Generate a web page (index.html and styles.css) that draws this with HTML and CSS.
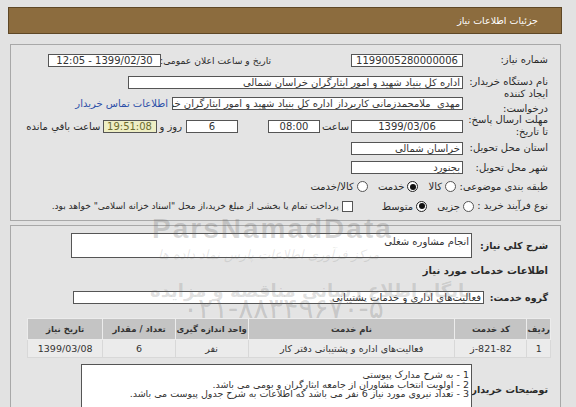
FILE: index.html
```html
<!DOCTYPE html>
<html lang="fa" dir="rtl">
<head>
<meta charset="utf-8">
<link rel="stylesheet" href="styles.css">
</head>
<body>
<div class="page">
  <div class="titlebar">جزئیات اطلاعات نیاز</div>

  <div class="box box1">
    <div class="row r1">
      <div class="lbl">شماره نیاز:</div>
      <div class="inp w-num center">1199005280000006</div>
      <div class="lbl-mid">تاریخ و ساعت اعلان عمومی:</div>
      <div class="inp w-date center">1399/02/30 - 12:05</div>
    </div>
    <div class="row r2">
      <div class="lbl">نام دستگاه خریدار:</div>
      <div class="inp w-org">اداره کل بنیاد شهید و امور ایثارگران خراسان شمالی</div>
    </div>
    <div class="row r3">
      <div class="lbl two3">ایجاد کننده<br>درخواست:</div>
      <div class="inp w-creator">مهدی&nbsp; ملامحمدزمانی کاربرداز اداره کل بنیاد شهید و امور ایثارگران خراسان شمالی</div>
      <a class="link" href="#">اطلاعات تماس خریدار</a>
    </div>
    <div class="row r4">
      <div class="lbl">مهلت ارسال پاسخ:<br>تا تاریخ:</div>
      <div class="inp w-num center">1399/03/06</div>
      <div class="txt t-saat">ساعت</div>
      <div class="inp w-small center">08:00</div>
      <div class="inp w-small center gap-day">6</div>
      <div class="txt t-rooz">روز و</div>
      <div class="inp w-time center remain">19:51:08</div>
      <div class="txt t-remain">ساعت باقي مانده</div>
    </div>
    <div class="row r5">
      <div class="lbl">استان محل تحویل:</div>
      <div class="inp w-num">خراسان شمالی</div>
    </div>
    <div class="row r6">
      <div class="lbl">شهر محل تحویل:</div>
      <div class="inp w-num">بجنورد</div>
    </div>
    <div class="row r7">
      <div class="lbl">طبقه بندی موضوعی:</div>
      <div class="opts opts7">
        <span class="radio"></span><span class="opt">کالا</span>
        <span class="radio on"></span><span class="opt">خدمت</span>
        <span class="radio"></span><span class="opt">کالا/خدمت</span>
      </div>
    </div>
    <div class="row r8">
      <div class="lbl lbl8">نوع فرآیند خرید :</div>
      <div class="opts opts8">
        <span class="radio"></span><span class="opt">جزیی</span>
        <span class="radio on"></span><span class="opt before-check">متوسط</span>
        <span class="check"></span><span class="opt long">پرداخت تمام یا بخشی از مبلغ خرید،از محل "اسناد خزانه اسلامی" خواهد بود.</span>
      </div>
    </div>
  </div>

  <div class="box box2">
    <div class="row b-desc">
      <div class="blbl w76">شرح کلي نياز:</div>
      <div class="inp area-desc">انجام مشاوره شغلی</div>
    </div>
    <div class="section">اطلاعات خدمات مورد نیاز</div>
    <div class="row b-group">
      <div class="blbl w64">گروه خدمت:</div>
      <div class="inp w-group">فعالیت‌های اداری و خدمات پشتیبانی</div>
    </div>
    <table class="grid">
      <thead>
        <tr>
          <th class="c1">ردیف</th>
          <th class="c2">کد خدمت</th>
          <th class="c3">نام خدمت</th>
          <th class="c4">واحد اندازه گیری</th>
          <th class="c5">تعداد / مقدار</th>
          <th class="c6">تاریخ نیاز</th>
        </tr>
      </thead>
      <tbody>
        <tr>
          <td>1</td>
          <td>821-82-ز</td>
          <td>فعالیت‌های اداره و پشتیبانی دفتر کار</td>
          <td>نفر</td>
          <td>6</td>
          <td>1399/03/08</td>
        </tr>
      </tbody>
    </table>
    <div class="row b-notes">
      <div class="blbl w76">توضیحات خریدار:</div>
      <div class="inp area-notes">1 - به شرح مدارک پیوستی<br>2 - اولویت انتخاب مشاوران از جامعه ایثارگران و بومی می باشد.<br>3 - تعداد نیروی مورد نیاز 6 نفر می باشد که اطلاعات به شرح جدول پیوست می باشد.</div>
    </div>
  </div>

  <div class="wm wm-latin">ParsNamadData</div>
  <div class="wm wm-fa1">مرکز فرآوری اطلاعات پارس نماد داده ها</div>
  <div class="wm wm-fa2">پایگاه اطلاع رسانی مناقصه و مزایده</div>
  <div class="wm wm-tel">۰۲۱-۸۸۳۴۹۶۷۰-۵</div>
</div>
</body>
</html>
```

FILE: styles.css
```css
html, body {
  margin: 0;
  padding: 0;
}
body {
  background: #e2e2e2;
  font-family: "DejaVu Sans", sans-serif;
  font-size: 10px;
  color: #2a2a2a;
  overflow: hidden;
}
.page {
  width: 576px;
  height: 407px;
  padding: 7px 14px 0 8px;
  box-sizing: border-box;
  position: relative;
  overflow: hidden;
}
.titlebar {
  height: 25px;
  background: #8c6c3e;
  border: 1px solid #5e4726;
  color: #fff;
  font-size: 9.5px;
  line-height: 25px;
  padding-right: 23px;
}
.box {
  border: 1px solid #a8a8a8;
  background: #e4e4e4;
  margin-left: 2px;
  margin-right: 1px;
  padding-right: 12px;
}
.box1 {
  margin-top: 10px;
  padding-top: 4px;
  height: 171px;
}
.box2 {
  margin-top: 4px;
  padding-top: 7px;
  height: 200px;
}
.row {
  display: flex;
  align-items: center;
  position: relative;
  z-index: 2;
  white-space: nowrap;
}
.lbl {
  width: 85px;
  flex: none;
  line-height: 12px;
}
.two3 {
  line-height: 15px;
  position: relative;
  top: -3px;
}
.inp {
  background: #fff;
  border: 1px solid #555;
  height: 11px;
  line-height: 11px;
  padding: 0 2px;
  white-space: nowrap;
  overflow: hidden;
  flex: none;
  color: #333;
}
.center { text-align: center; }
.w-num { width: 106px; }
.w-date { width: 107px; }
.w-org { width: 329px; }
.w-creator { width: 285px; }
.w-small { width: 46px; }
.w-time { width: 48px; }
.lbl-mid {
  width: 106px;
  font-size: 9.2px;
  margin-right: 80px;
  margin-left: 4px;
  flex: none;
}
.link {
  color: #2b4fa8;
  text-decoration: none;
  margin-right: 4px;
}
.txt { flex: none; }
.t-saat { width: 31px; text-align: center; }
.gap-day { margin-right: 30px; }
.t-rooz { margin: 0 4px 0 3px; }
.remain {
  background: #eeeec4;
  color: #6b6b2e;
}
.t-remain { margin-right: 2px; }

.r1 { height: 22px; }
.r2 { height: 22px; }
.r3 { height: 21px; }
.r4 { height: 24px; }
.r5 { height: 20px; }
.r6 { height: 19px; }
.r7 { height: 19px; }
.r8 { height: 20px; }

.opts {
  display: flex;
  align-items: center;
}
.radio {
  width: 9px;
  height: 9px;
  border: 1px solid #555;
  border-radius: 50%;
  background: #fff;
  flex: none;
  position: relative;
}
.radio.on {
  border-color: #222;
}
.radio.on::after {
  content: "";
  position: absolute;
  left: 1.5px;
  top: 1.5px;
  width: 6px;
  height: 6px;
  border-radius: 50%;
  background: #111;
}
.check {
  width: 9px;
  height: 9px;
  border: 1px solid #555;
  background: #fff;
  flex: none;
}
.opt { margin: 0 3px 0 10px; }
.opts7 { margin-right: 7px; }
.lbl8 { width: 62px; }
.opts8 { margin-right: 12px; }
.before-check { margin-left: 29px; }
.long { font-size: 9px; margin-left: 0; }

.blbl {
  flex: none;
  font-weight: bold;
  font-size: 9.5px;
}
.w76 { width: 76px; }
.w64 { width: 64px; }
.area-desc {
  width: 395px;
  height: 22px;
  line-height: 13px;
  padding: 1px 2px 0;
  white-space: normal;
}
.b-desc { height: 24px; }
.section {
  font-weight: bold;
  font-size: 10px;
  margin-top: 6px;
  height: 16px;
  line-height: 16px;
  position: relative;
  z-index: 2;
}
.b-group { height: 14px; margin-top: 11px; }
.w-group { width: 405px; }

.grid {
  position: relative;
  z-index: 2;
  margin-top: 14px;
  margin-right: -3px;
  border-collapse: collapse;
  width: 524px;
  font-size: 9.5px;
  white-space: nowrap;
}
.grid th {
  background: #c4c4c4;
  font-weight: bold;
  font-size: 8.5px;
  height: 20px;
  padding: 0;
  border: 1px solid #ececec;
  color: #333;
}
.grid td {
  background: #ebebeb;
  height: 17px;
  padding: 0;
  text-align: center;
  border: 1px solid #d8d8d8;
  color: #333;
}
.c1 { width: 20px; }
.c2 { width: 72px; }
.c3 { width: 208px; }
.c4 { width: 72px; }
.c5 { width: 72px; }
.c6 { width: 75px; }

.b-notes { margin-top: 6px; height: 50px; }
.area-notes {
  width: 385px;
  height: 43px;
  line-height: 9.5px;
  padding: 5px 2px 0;
  white-space: normal;
  font-size: 9.5px;
}

.wm {
  position: absolute;
  z-index: 3;
  white-space: nowrap;
  pointer-events: none;
}
.wm-latin {
  left: 152px;
  top: 213px;
  font-family: "Liberation Sans", sans-serif;
  font-weight: bold;
  font-size: 28px;
  letter-spacing: 2px;
  color: rgba(100, 100, 100, 0.25);
  direction: ltr;
}
.wm-fa1 {
  left: 158px;
  top: 247px;
  font-size: 13px;
  font-style: italic;
  color: rgba(100, 100, 100, 0.17);
}
.wm-fa2 {
  left: 150px;
  top: 280px;
  font-size: 18px;
  font-weight: bold;
  color: rgba(100, 100, 100, 0.2);
}
.wm-tel {
  left: 183px;
  top: 292px;
  font-size: 28px;
  color: rgba(100, 100, 100, 0.24);
  direction: ltr;
}
```
